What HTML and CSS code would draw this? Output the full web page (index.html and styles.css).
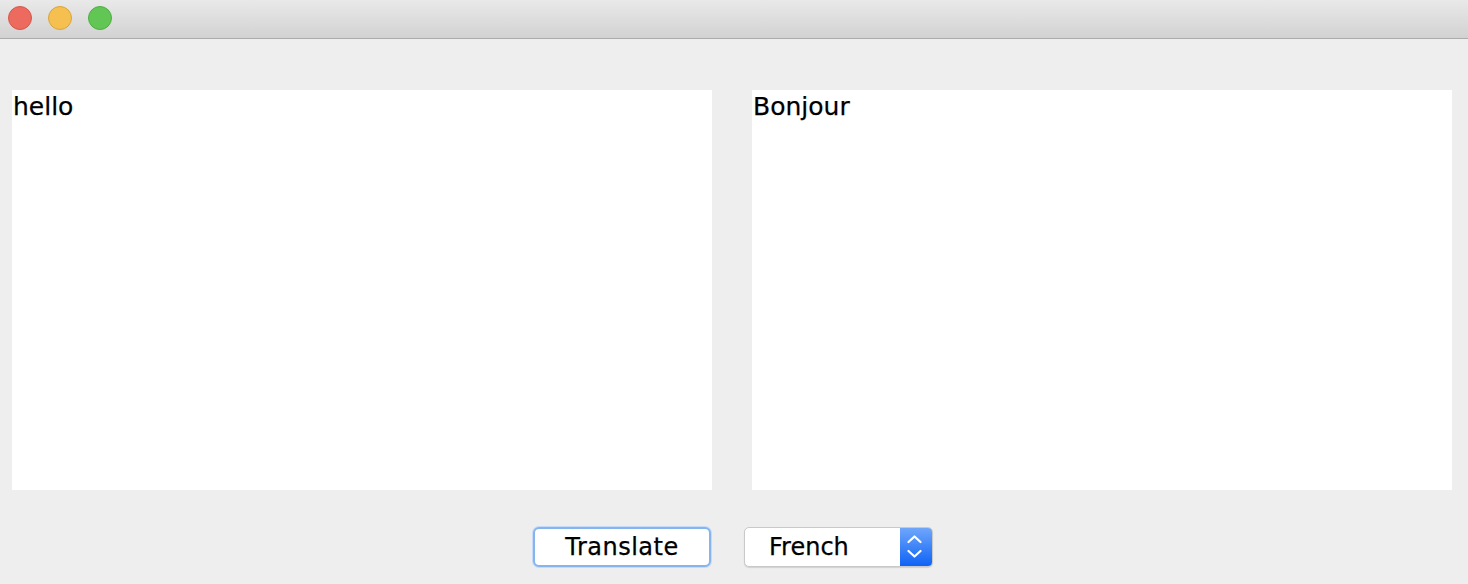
FILE: index.html
```html
<!DOCTYPE html>
<html>
<head>
<meta charset="utf-8">
<link rel="stylesheet" href="styles.css">
</head>
<body>
<div class="window">
  <div class="titlebar">
    <span class="light red"></span>
    <span class="light yellow"></span>
    <span class="light green"></span>
  </div>
  <div class="content">
    <div class="panes">
      <div class="pane">hello</div>
      <div class="pane">Bonjour</div>
    </div>
    <div class="controls">
      <button class="btn">Translate</button>
      <div class="select">
        <span class="select-label">French</span>
        <span class="select-arrows">
          <svg width="15" height="24" viewBox="0 0 15 24">
            <path d="M1.5 7 L7.5 1.5 L13.5 7" fill="none" stroke="#fff" stroke-width="2.2" stroke-linecap="round" stroke-linejoin="round"/>
            <path d="M1.5 16 L7.5 21.5 L13.5 16" fill="none" stroke="#fff" stroke-width="2.2" stroke-linecap="round" stroke-linejoin="round"/>
          </svg>
        </span>
      </div>
    </div>
  </div>
</div>
</body>
</html>
```

FILE: styles.css
```css
html, body {
  margin: 0;
  padding: 0;
  background: #eeeeee;
  font-family: "DejaVu Sans", "Liberation Sans", sans-serif;
}
.window {
  width: 1468px;
  height: 584px;
  overflow: hidden;
}
.titlebar {
  height: 39px;
  border-bottom: 1px solid #acacac;
  background: linear-gradient(#e9e9e9, #d2d2d2);
  display: flex;
  align-items: flex-start;
  padding-left: 8px;
  padding-top: 6px;
  gap: 16px;
  box-sizing: border-box;
}
.light {
  width: 24px;
  height: 24px;
  border-radius: 50%;
  box-sizing: border-box;
}
.red { background: #ec6a5e; border: 1px solid #d5584d; }
.yellow { background: #f5c04f; border: 1px solid #d9a53f; }
.green { background: #62c654; border: 1px solid #4fae43; }
.content {
  padding: 51px 16px 0 12px;
}
.panes {
  display: flex;
  gap: 40px;
}
.pane {
  width: 700px;
  height: 400px;
  background: #ffffff;
  font-size: 25px;
  line-height: 33px;
  color: #000;
  padding: 0 1px;
  box-sizing: border-box;
  -webkit-text-stroke: 0.25px #000;
}
.controls {
  display: flex;
  justify-content: center;
  gap: 33px;
  margin-top: 37px;
  padding-left: 2px;
}
.btn {
  width: 178px;
  height: 40px;
  background: #fff;
  border: 2px solid #86b4ef;
  border-radius: 6px;
  font-family: "DejaVu Sans", sans-serif;
  font-size: 24px;
  letter-spacing: 0.5px;
  color: #000;
  padding: 0;
  box-shadow: 0 0 0 1px #c6dbf7;
  -webkit-text-stroke: 0.25px #000;
}
.select {
  width: 189px;
  height: 40px;
  box-sizing: border-box;
  display: flex;
  background: #fff;
  border: 1px solid #c9c9c9;
  border-radius: 5px;
  overflow: hidden;
  box-shadow: 0 1px 1px rgba(0,0,0,0.12);
}
.select-label {
  flex: 1;
  font-size: 24px;
  line-height: 38px;
  padding-left: 24px;
  color: #000;
  -webkit-text-stroke: 0.25px #000;
}
.select-arrows {
  width: 32px;
  box-sizing: border-box;
  background: linear-gradient(#6fa6fb, #0e63f6);
  display: flex;
  align-items: center;
  justify-content: center;
  padding-right: 3px;
}
```
